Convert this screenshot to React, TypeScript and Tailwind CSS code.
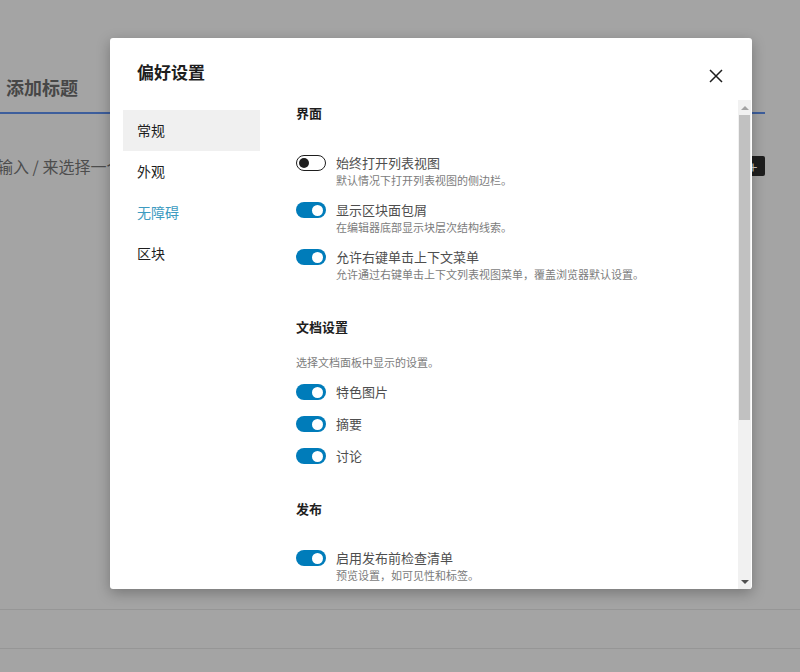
import React from 'react';

const font = { fontFamily: '"Noto Sans CJK SC", "Noto Sans", sans-serif' };

type ToggleProps = { on: boolean };

function Toggle({ on }: ToggleProps) {
  if (!on) {
    return (
      <span className="shrink-0 w-[30px] h-[16px] rounded-full border-[1.5px] border-[#1e1e1e] bg-white flex items-center pl-[2px]">
        <span className="w-[10px] h-[10px] rounded-full bg-[#1e1e1e]" />
      </span>
    );
  }
  return (
    <span className="shrink-0 w-[30px] h-[16px] rounded-full bg-[#007cba] flex items-center justify-end pr-[3px]">
      <span className="w-[11px] h-[11px] rounded-full bg-white" />
    </span>
  );
}

function Option({ on, label, help }: { on: boolean; label: string; help?: string }) {
  return (
    <div className="flex items-start gap-[10px]">
      <div className="pt-[1px]">
        <Toggle on={on} />
      </div>
      <div>
        <p className="text-[13px] leading-[18px] text-[#4e4e4e]">{label}</p>
        {help && <p className="text-[11px] leading-[16px] text-[#7c7c7c]">{help}</p>}
      </div>
    </div>
  );
}

const navItems = ['常规', '外观', '无障碍', '区块'];

export default function App() {
  return (
    <div className="relative w-[800px] h-[672px] overflow-hidden bg-[#a4a4a4]" style={font}>
      {/* Editor behind the modal */}
      <div className="flex flex-col pt-[74px]">
        <h1 className="pl-[6px] text-[18px] leading-[26px] font-semibold text-[#474747]">添加标题</h1>
        <div className="mt-[12px] w-[765px] h-[2px] bg-[#3d5e9c]" />
        <div className="mt-[42px] w-[765px] flex items-center justify-between">
          <div className="w-[110px] overflow-hidden whitespace-nowrap">
            <p className="-ml-[3px] text-[16px] leading-[20px] text-[#4d4d4d]">输入 / 来选择一个</p>
          </div>
          <span className="w-[24px] h-[20px] rounded-[2px] bg-[#1e1e1e] flex items-center justify-center text-[#d0d0d0] text-[16px] leading-none">+</span>
        </div>
        <div className="mt-[433px] h-px bg-[#969696]" />
        <div className="mt-[38px] h-px bg-[#969696]" />
      </div>

      {/* Preferences modal */}
      <div className="absolute left-[110px] top-[38px] w-[642px] h-[551px] bg-white rounded-[3px] shadow-[0_4px_14px_rgba(0,0,0,0.28)] flex flex-col overflow-hidden">
        <header className="h-[62px] shrink-0 flex items-start justify-between pl-[27px] pr-[29px] pt-[24px]">
          <h2 className="text-[17px] leading-[20px] font-semibold text-[#1e1e1e]">偏好设置</h2>
          <svg width="14" height="14" viewBox="0 0 14 14" className="mt-[7px]">
            <path d="M1 1 L13 13 M13 1 L1 13" stroke="#1e1e1e" strokeWidth="1.5" fill="none" />
          </svg>
        </header>

        <div className="flex flex-1 min-h-0">
          <nav className="w-[150px] shrink-0 pl-[13px] pt-[10px]">
            {navItems.map((item, i) => (
              <div
                key={item}
                className={
                  'h-[41px] px-[14px] flex items-center text-[14px] ' +
                  (i === 0 ? 'bg-[#f0f0f0] text-[#1e1e1e]' : i === 2 ? 'text-[#3d9bc1]' : 'text-[#1e1e1e]')
                }
              >
                {item}
              </div>
            ))}
          </nav>

          <div className="flex-1 min-w-0 pl-[36px] overflow-hidden">
            <section className="pt-[3px]">
              <h3 className="text-[13px] leading-[20px] font-semibold text-[#1e1e1e]">界面</h3>
              <div className="mt-[31px] flex flex-col gap-[13px]">
                <Option on={false} label="始终打开列表视图" help="默认情况下打开列表视图的侧边栏。" />
                <Option on label="显示区块面包屑" help="在编辑器底部显示块层次结构线索。" />
                <Option on label="允许右键单击上下文菜单" help="允许通过右键单击上下文列表视图菜单，覆盖浏览器默认设置。" />
              </div>
            </section>

            <section className="mt-[35px]">
              <h3 className="text-[13px] leading-[20px] font-semibold text-[#1e1e1e]">文档设置</h3>
              <p className="mt-[17px] text-[11px] leading-[16px] text-[#7c7c7c]">选择文档面板中显示的设置。</p>
              <div className="mt-[13px] flex flex-col gap-[14px]">
                <Option on label="特色图片" />
                <Option on label="摘要" />
                <Option on label="讨论" />
              </div>
            </section>

            <section className="mt-[34px]">
              <h3 className="text-[13px] leading-[20px] font-semibold text-[#1e1e1e]">发布</h3>
              <div className="mt-[30px]">
                <Option on label="启用发布前检查清单" help="预览设置，如可见性和标签。" />
              </div>
            </section>
          </div>

          {/* scrollbar */}
          <div className="w-[13px] shrink-0 mr-px bg-[#f1f1f1] flex flex-col">
            <div className="h-[15px] flex items-center justify-center">
              <span className="w-0 h-0 border-x-[4px] border-x-transparent border-b-[4px] border-b-[#a3a3a3]" />
            </div>
            <div className="mx-[1px] h-[305px] bg-[#c1c1c1]" />
            <div className="flex-1" />
            <div className="h-[15px] flex items-center justify-center">
              <span className="w-0 h-0 border-x-[4px] border-x-transparent border-t-[4px] border-t-[#505050]" />
            </div>
          </div>
        </div>
      </div>
    </div>
  );
}
